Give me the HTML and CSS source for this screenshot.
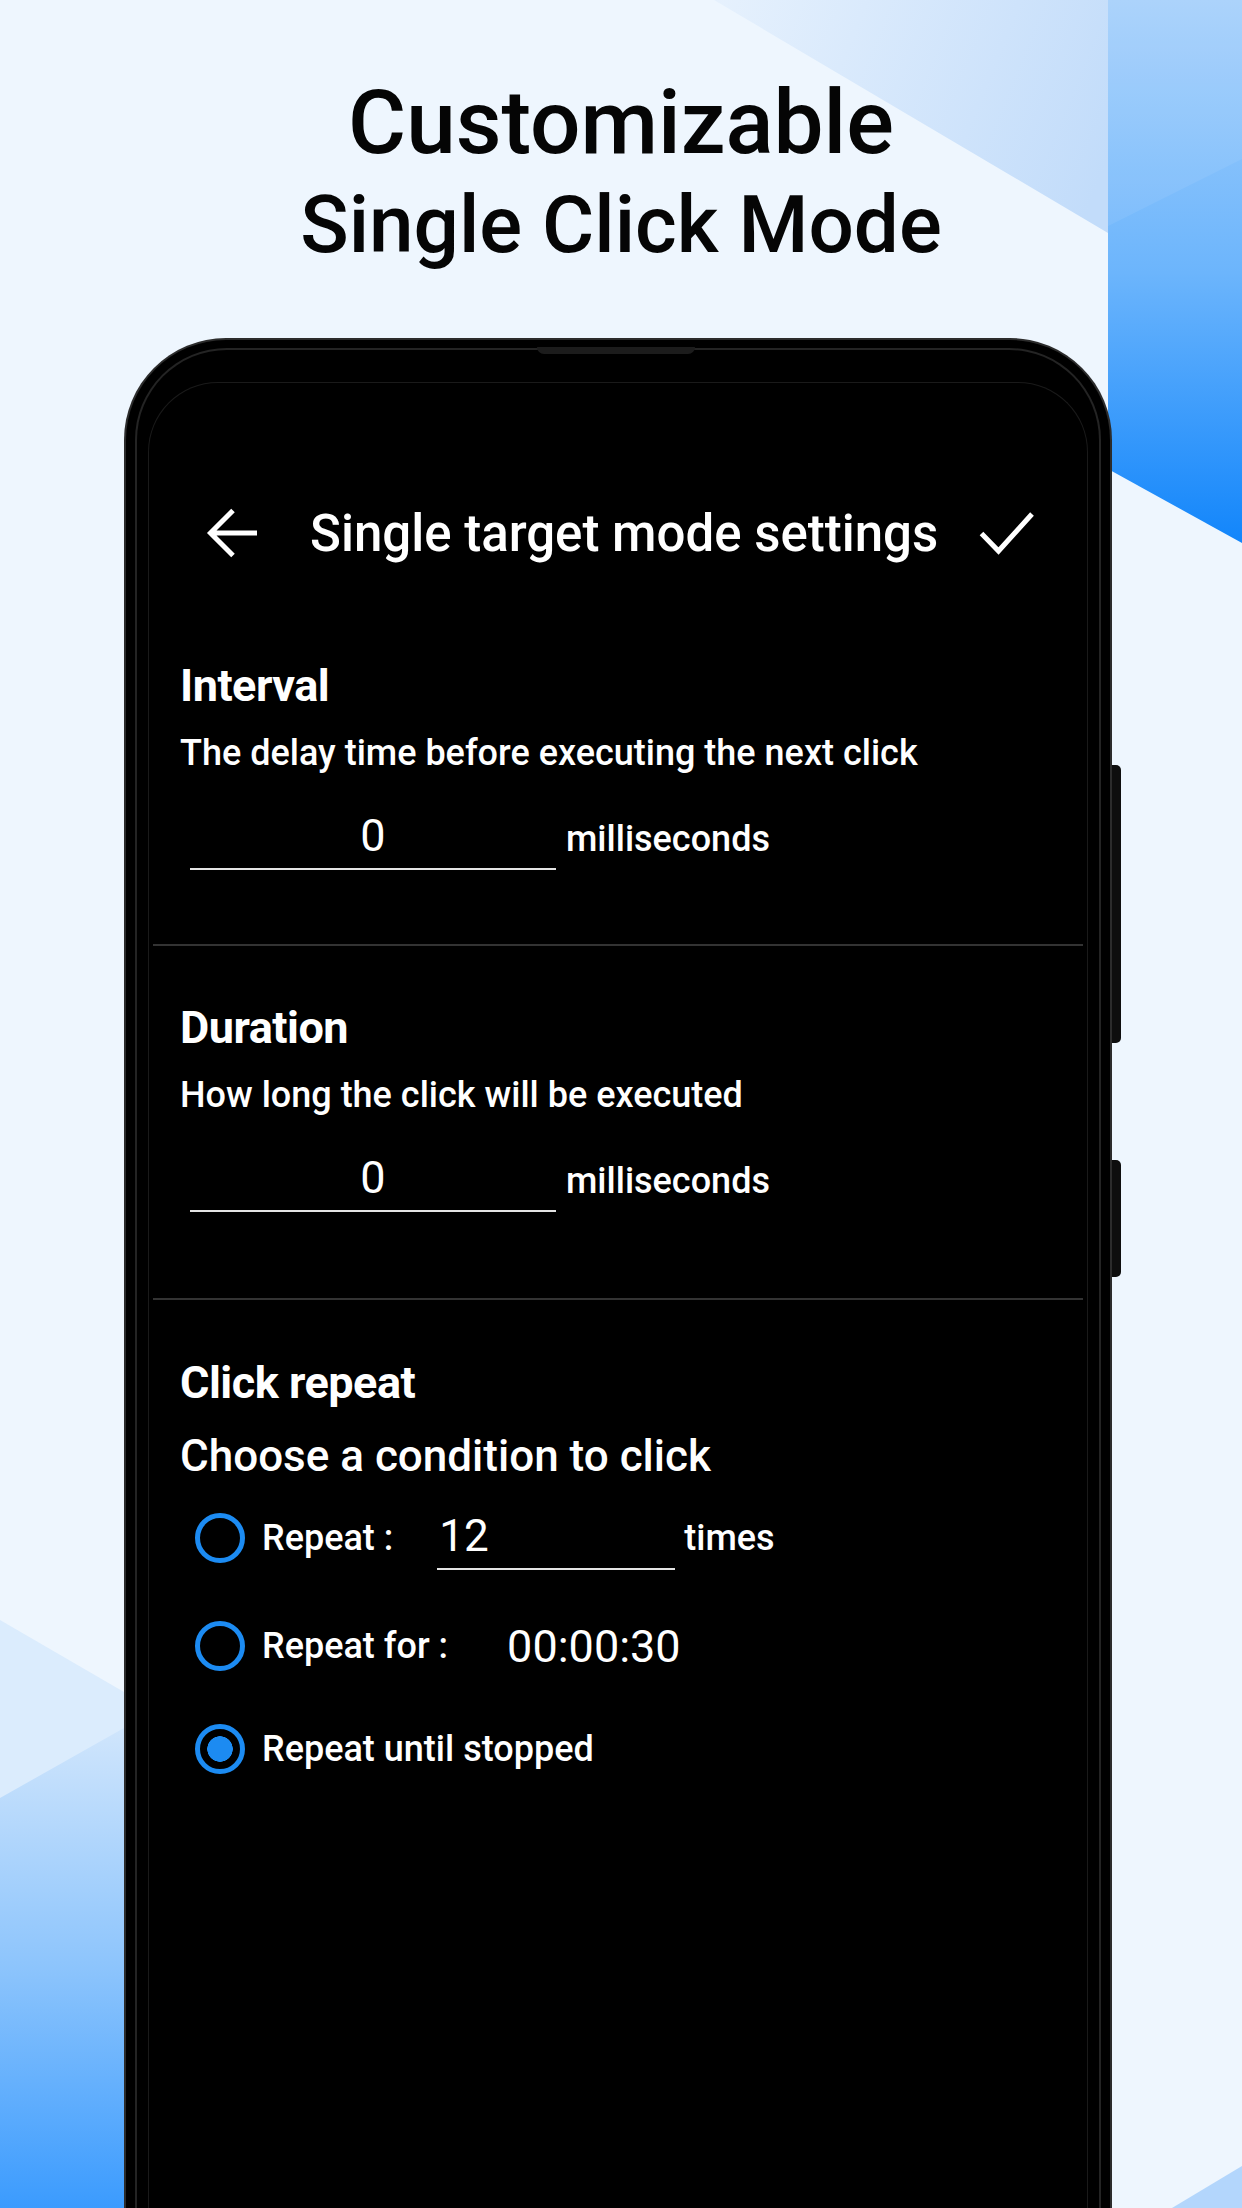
FILE: index.html
```html
<!DOCTYPE html>
<html lang="en">
<head>
<meta charset="utf-8">
<title>Customizable Single Click Mode</title>
<link rel="stylesheet" href="styles.css">
</head>
<body>
<div class="page">
  <svg class="bg" width="1242" height="2208" viewBox="0 0 1242 2208" aria-hidden="true">
    <defs>
      <linearGradient id="gTop" x1="714" y1="0" x2="1108" y2="160" gradientUnits="userSpaceOnUse">
        <stop offset="0" stop-color="#e6f1fd"/>
        <stop offset="1" stop-color="#c2dcfa"/>
      </linearGradient>
      <linearGradient id="gBand" x1="0" y1="0" x2="0" y2="545" gradientUnits="userSpaceOnUse">
        <stop offset="0" stop-color="#a6d0fb"/>
        <stop offset="0.5" stop-color="#6cb5fc"/>
        <stop offset="1" stop-color="#1185fb"/>
      </linearGradient>
      <linearGradient id="gLeft" x1="0" y1="1730" x2="0" y2="2208" gradientUnits="userSpaceOnUse">
        <stop offset="0" stop-color="#cfe5fc"/>
        <stop offset="0.5" stop-color="#8cc4fc"/>
        <stop offset="1" stop-color="#3b9bfe"/>
      </linearGradient>
    </defs>
    <rect width="1242" height="2208" fill="#eef6fe"/>
    <polygon points="714,0 1108,0 1108,233" fill="url(#gTop)"/>
    <polygon points="1108,0 1242,0 1242,543 1108,469" fill="url(#gBand)"/>
    <polygon points="1108,0 1242,0 1242,159 1108,226" fill="#ffffff" opacity="0.07"/>
    <polygon points="0,1620 124,1692 124,2208 0,2208" fill="#dbecfd"/>
    <polygon points="0,1798 124,1728 124,2208 0,2208" fill="url(#gLeft)"/>
    <polygon points="1172,2208 1242,2166 1242,2208" fill="#b3d6fc"/>
  </svg>

  <header class="hero">
    <h1 class="hero-l1">Customizable</h1>
    <h2 class="hero-l2">Single Click Mode</h2>
  </header>

  <div class="phone">
    <span class="notch"></span>
    <span class="side-btn side-btn-a"></span>
    <span class="side-btn side-btn-b"></span>
    <div class="frame">
      <div class="screen">
        <div class="toolbar">
          <svg class="tb-icon" width="52" height="52" viewBox="0 0 52 52" aria-hidden="true">
            <path d="M51 26 H5 M27 3.5 L4.5 26 L27 48.5" fill="none" stroke="#fff" stroke-width="5"/>
          </svg>
          <span class="tb-title">Single target mode settings</span>
          <svg class="tb-check" width="56" height="44" viewBox="0 0 56 44" aria-hidden="true">
            <path d="M2.5 22.5 L19.5 40 L53 3" fill="none" stroke="#fff" stroke-width="5"/>
          </svg>
        </div>

        <section class="sec sec-first">
          <h3 class="sec-title">Interval</h3>
          <p class="sec-desc">The delay time before executing the next click</p>
          <div class="field-row">
            <span class="field">0</span>
            <span class="unit">milliseconds</span>
          </div>
        </section>
        <hr class="divider divider-a">

        <section class="sec">
          <h3 class="sec-title">Duration</h3>
          <p class="sec-desc">How long the click will be executed</p>
          <div class="field-row">
            <span class="field">0</span>
            <span class="unit">milliseconds</span>
          </div>
        </section>
        <hr class="divider divider-b">

        <section class="sec sec-repeat">
          <h3 class="sec-title">Click repeat</h3>
          <p class="sec-lead">Choose a condition to click</p>
          <div class="opt opt-count">
            <span class="radio"></span>
            <span class="opt-label">Repeat :</span>
            <span class="count-field">12</span>
            <span class="opt-label opt-unit">times</span>
          </div>
          <div class="opt opt-time">
            <span class="radio"></span>
            <span class="opt-label">Repeat for :</span>
            <span class="time-value">00:00:30</span>
          </div>
          <div class="opt opt-until">
            <span class="radio radio-on"></span>
            <span class="opt-label">Repeat until stopped</span>
          </div>
        </section>
      </div>
    </div>
  </div>
</div>
</body>
</html>
```
FILE: styles.css
```css
* { box-sizing: border-box; }
html, body { margin: 0; padding: 0; }
body {
  width: 1242px;
  height: 2208px;
  overflow: hidden;
  background: #eef6fe;
  font-family: Roboto, "Liberation Sans", sans-serif;
}
.page {
  position: relative;
  width: 1242px;
  height: 2208px;
  overflow: hidden;
}
.bg {
  position: absolute;
  left: 0;
  top: 0;
  z-index: 0;
}
.hero {
  position: relative;
  z-index: 1;
  padding-top: 70px;
  text-align: center;
  color: #050505;
}
.hero-l1 {
  margin: 0;
  font-size: 89px;
  line-height: 105px;
  font-weight: 500;
}
.hero-l2 {
  margin: 0;
  font-size: 80px;
  line-height: 100px;
  font-weight: 500;
}

/* phone */
.phone {
  position: relative;
  z-index: 1;
  margin-top: 63px;
  margin-left: 124px;
  width: 988px;
  height: 1920px;
  background: #000;
  border: 2px solid #2c2c2c;
  border-bottom: 0;
  border-radius: 102px 102px 0 0;
  padding: 8px 9px 0;
}
.notch {
  position: absolute;
  left: 411px;
  top: 7px;
  width: 158px;
  height: 7px;
  background: #1c1c1c;
  border-radius: 0 0 8px 8px;
}
.side-btn {
  position: absolute;
  right: -11px;
  width: 9px;
  background: #0e0e0e;
  border-radius: 0 5px 5px 0;
}
.side-btn-a { top: 425px; height: 278px; }
.side-btn-b { top: 820px; height: 117px; }

.frame {
  height: 100%;
  border: 2px solid #242424;
  border-bottom: 0;
  border-radius: 92px 92px 0 0;
  padding: 32px 11px 0;
  background: #000;
}
.screen {
  height: 100%;
  border: 1px solid #1a1a1a;
  border-bottom: 0;
  border-radius: 70px 70px 0 0;
  background: #000;
  color: #fff;
  padding-top: 100px;
}

/* toolbar */
.toolbar {
  display: flex;
  align-items: center;
  height: 100px;
  padding-left: 57px;
  padding-right: 52px;
}
.tb-icon { flex: none; }
.tb-title {
  margin-left: 52px;
  font-size: 51px;
  font-weight: 500;
  white-space: nowrap;
}
.tb-check { flex: none; margin-left: auto; }

/* sections */
.sec { padding: 55px 0 0 31px; }
.sec-first { padding-top: 76px; }
.sec-repeat { padding-top: 56px; }
.sec-title {
  margin: 0;
  font-size: 45px;
  line-height: 54px;
  font-weight: 700;
  letter-spacing: -0.5px;
}
.sec-desc {
  margin: 18px 0 0;
  font-size: 36px;
  line-height: 44px;
  font-weight: 500;
}
.field-row {
  display: flex;
  align-items: baseline;
  margin-top: 35px;
}
.field {
  display: block;
  margin-left: 10px;
  width: 366px;
  text-align: center;
  font-size: 45px;
  line-height: 52px;
  padding-bottom: 6px;
  border-bottom: 2px solid #e4e4e4;
}
.unit {
  margin-left: 10px;
  font-size: 36px;
  font-weight: 500;
}
.divider {
  margin: 0 4px;
  border: 0;
  height: 2px;
  background: #333;
}
.divider-a { margin-top: 74px; }
.divider-b { margin-top: 86px; }

.sec-lead {
  margin: 21px 0 0;
  font-size: 44px;
  line-height: 50px;
  font-weight: 500;
}
.opt {
  display: flex;
  align-items: center;
  height: 80px;
  padding-left: 15px;
}
.opt-count { height: 84px; margin-top: 15px; }
.opt-time { margin-top: 26px; }
.opt-until { margin-top: 23px; }
.radio {
  flex: none;
  width: 50px;
  height: 50px;
  border: 5px solid #1c8bf2;
  border-radius: 50%;
  margin-right: 17px;
}
.radio-on {
  background: radial-gradient(circle, #1c8bf2 0 12.5px, transparent 13px);
}
.opt-label {
  font-size: 36px;
  font-weight: 500;
  white-space: nowrap;
}
.count-field {
  display: block;
  margin-left: 44px;
  width: 238px;
  padding: 6px 0 8px 2px;
  font-size: 44px;
  line-height: 48px;
  border-bottom: 2px solid #e4e4e4;
}
.opt-unit { margin-left: 9px; }
.time-value {
  margin-left: 59px;
  font-size: 45px;
}
```
